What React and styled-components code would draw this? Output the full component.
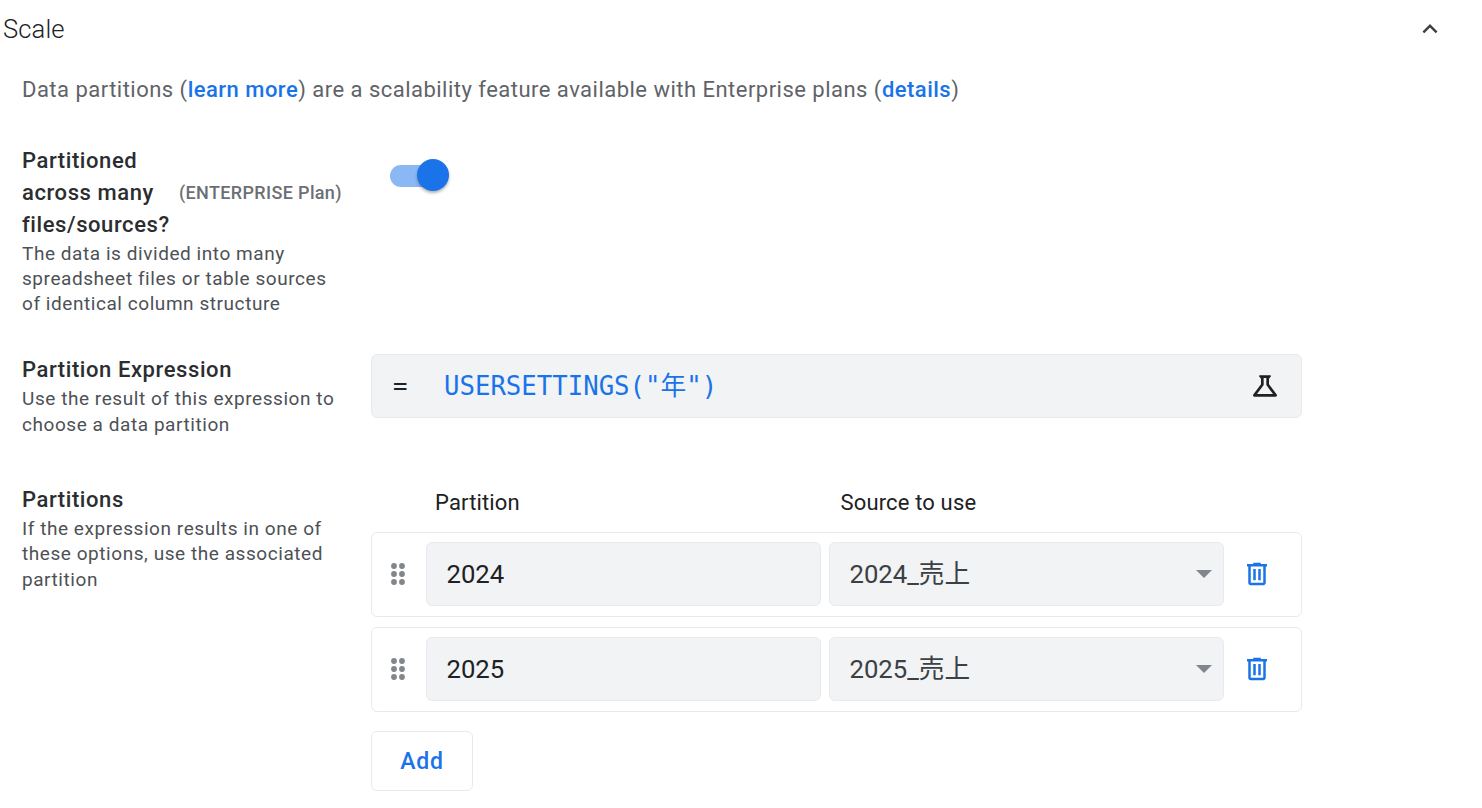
import styled, { createGlobalStyle } from 'styled-components';

const GlobalStyle = createGlobalStyle`
  html, body {
    margin: 0;
    padding: 0;
    background: #fff;
    font-family: Roboto, "Noto Sans CJK JP", sans-serif;
  }
  * { box-sizing: border-box; }
`;

const Page = styled.div`
  width: 1482px;
  height: 808px;
  overflow: hidden;
`;

const SectionHeader = styled.div`
  display: flex;
  justify-content: space-between;
  align-items: center;
  height: 58px;
  padding: 0 37px 0 3px;
`;

const SectionTitle = styled.h2`
  margin: 0;
  font-size: 25.6px;
  font-weight: 300;
  letter-spacing: 0.1px;
  color: #202124;
`;

const ChevronIcon = styled.svg`
  width: 30px;
  height: 30px;
  display: block;
`;

const SectionBody = styled.div`
  padding: 16px 0 0 22px;
`;

const Intro = styled.p`
  margin: 0 0 39px;
  height: 32px;
  line-height: 32px;
  font-size: 22px;
  letter-spacing: 0.48px;
  color: #5f6368;
`;

const TextLink = styled.a`
  color: #1a73e8;
  font-weight: 500;
  text-decoration: none;
`;

const SettingRow = styled.div`
  display: grid;
  grid-template-columns: 349px 931px;
  margin-bottom: ${(p) => p.$gap}px;
`;

const LabelColumn = styled.div`
  display: flex;
  flex-direction: column;
`;

const LabelLine = styled.div`
  display: flex;
  align-items: center;
  gap: 24px;
  width: 320px;
`;

const LabelTitle = styled.div`
  font-size: 22px;
  line-height: 32px;
  font-weight: 500;
  letter-spacing: 0.58px;
  color: #2b2d30;
  width: ${(p) => p.$width || 'auto'};
  flex-shrink: 0;
`;

const PlanTag = styled.span`
  position: relative;
  top: -1px;
  font-size: 18px;
  font-weight: 500;
  letter-spacing: 0.35px;
  color: #6b6f74;
  white-space: nowrap;
`;

const LabelHint = styled.div`
  font-size: 19px;
  line-height: ${(p) => p.$leading || 25.5}px;
  letter-spacing: 0.56px;
  color: #4d5156;
  width: 320px;
`;

const SwitchTrack = styled.div`
  position: relative;
  width: 56px;
  height: 22px;
  margin: 20px 0 0 19px;
  border-radius: 11px;
  background: #8ab8f4;
`;

const SwitchKnob = styled.div`
  position: absolute;
  right: -3px;
  top: -6px;
  width: 32px;
  height: 32px;
  border-radius: 50%;
  background: #1a73e8;
  box-shadow: 0 2px 3px rgba(60, 64, 67, 0.4);
`;

const ExpressionBox = styled.div`
  display: flex;
  align-items: center;
  height: 64px;
  padding: 0 20px 0 21px;
  background: #f1f3f4;
  border: 1px solid #e8eaed;
  border-radius: 6px;
`;

const EqualsSign = styled.span`
  width: 51px;
  font-family: "DejaVu Sans Mono", monospace;
  font-size: 24px;
  color: #202124;
`;

const ExpressionText = styled.span`
  flex: 1;
  padding-top: 1px;
  font-family: "DejaVu Sans Mono", "Noto Sans CJK JP", monospace;
  font-size: 25.7px;
  line-height: 32px;
  font-weight: 400;
  color: #1a73e8;
`;

const FlaskIcon = styled.svg`
  width: 32px;
  height: 32px;
  display: block;
`;

const ColumnHeads = styled.div`
  display: grid;
  grid-template-columns: 405.5px 1fr;
  height: 32px;
  margin: 3px 0 13px;
  padding-left: 64px;
  font-size: 22px;
  line-height: 32px;
  letter-spacing: 0.15px;
  color: #202124;
`;

const PartitionCard = styled.div`
  display: flex;
  align-items: center;
  height: 85px;
  margin-bottom: 10px;
  border: 1px solid #e8eaed;
  border-radius: 6px;
  padding-left: 17px;
`;

const DragHandle = styled.svg`
  width: 18px;
  height: 26px;
  flex-shrink: 0;
  margin-right: 19px;
`;

const Field = styled.div`
  display: flex;
  align-items: center;
  height: 64px;
  width: ${(p) => p.$width}px;
  margin-right: ${(p) => p.$gap}px;
  padding: 0 11px 0 19.5px;
  background: #f1f3f4;
  border: 1px solid #e8eaed;
  border-radius: 6px;
  font-size: 25.7px;
  line-height: 32px;
  color: ${(p) => p.$color};
`;

const FieldValue = styled.span`
  flex: 1;
`;

const Caret = styled.span`
  width: 0;
  height: 0;
  border-left: 8px solid transparent;
  border-right: 8px solid transparent;
  border-top: 8px solid #80868b;
`;

const TrashIcon = styled.svg`
  width: 30px;
  height: 30px;
  display: block;
  flex-shrink: 0;
`;

const AddButton = styled.button`
  display: block;
  width: 102px;
  height: 60px;
  margin-top: 19px;
  padding: 2px 0 0;
  background: #fff;
  border: 1px solid #e8eaed;
  border-radius: 6px;
  font-family: Roboto, sans-serif;
  font-size: 23px;
  font-weight: 500;
  letter-spacing: 0.8px;
  color: #1a73e8;
`;

const partitions = [
  { id: '2024', source: '2024_売上' },
  { id: '2025', source: '2025_売上' },
];

function PartitionRow({ id, source }) {
  return (
    <PartitionCard>
      <DragHandle viewBox="0 0 18 26" fill="#80868b">
        <circle cx="5" cy="5" r="2.9" />
        <circle cx="13" cy="5" r="2.9" />
        <circle cx="5" cy="13" r="2.9" />
        <circle cx="13" cy="13" r="2.9" />
        <circle cx="5" cy="21" r="2.9" />
        <circle cx="13" cy="21" r="2.9" />
      </DragHandle>
      <Field $width={395} $gap={8} $color="#202124">
        <FieldValue>{id}</FieldValue>
      </Field>
      <Field $width={395} $gap={18} $color="#3c4043">
        <FieldValue>{source}</FieldValue>
        <Caret />
      </Field>
      <TrashIcon viewBox="0 0 24 24" fill="#1a73e8">
        <path d="M15 4V3H9v1H4v2h1v13c0 1.1.9 2 2 2h10c1.1 0 2-.9 2-2V6h1V4h-5zm2 15H7V6h10v13zM9 8h2v9H9zm4 0h2v9h-2z" />
      </TrashIcon>
    </PartitionCard>
  );
}

function App() {
  return (
    <Page>
      <GlobalStyle />
      <SectionHeader>
        <SectionTitle>Scale</SectionTitle>
        <ChevronIcon viewBox="0 0 24 24" fill="#3c4043">
          <path d="M7.41 15.41 12 10.83l4.59 4.58L18 14l-6-6-6 6z" />
        </ChevronIcon>
      </SectionHeader>
      <SectionBody>
        <Intro>
          Data partitions (<TextLink href="#">learn more</TextLink>) are a scalability
          feature available with Enterprise plans (<TextLink href="#">details</TextLink>)
        </Intro>

        <SettingRow $gap={37.5}>
          <LabelColumn>
            <LabelTitle>Partitioned</LabelTitle>
            <LabelLine>
              <LabelTitle $width="133px">across many</LabelTitle>
              <PlanTag>(ENTERPRISE Plan)</PlanTag>
            </LabelLine>
            <LabelTitle>files/sources?</LabelTitle>
            <LabelHint $leading={25}>
              The data is divided into many spreadsheet files or table sources of identical
              column structure
            </LabelHint>
          </LabelColumn>
          <div>
            <SwitchTrack>
              <SwitchKnob />
            </SwitchTrack>
          </div>
        </SettingRow>

        <SettingRow $gap={46}>
          <LabelColumn>
            <LabelTitle>Partition Expression</LabelTitle>
            <LabelHint $leading={26}>
              Use the result of this expression to choose a data partition
            </LabelHint>
          </LabelColumn>
          <div>
            <ExpressionBox>
              <EqualsSign>=</EqualsSign>
              <ExpressionText>USERSETTINGS("年")</ExpressionText>
              <FlaskIcon viewBox="0 0 24 24" fill="#202124">
                <path d="M13 11.33 18 18H6l5-6.67V6h2m2.96-2H8.04c-.42 0-.65.48-.39.81L9 6.5v4.17L3.2 18.4c-.49.66-.02 1.6.8 1.6h16c.82 0 1.29-.94.8-1.6L15 10.67V6.5l1.35-1.69c.26-.33.03-.81-.39-.81z" />
              </FlaskIcon>
            </ExpressionBox>
          </div>
        </SettingRow>

        <SettingRow $gap={0}>
          <LabelColumn>
            <LabelTitle>Partitions</LabelTitle>
            <LabelHint>
              If the expression results in one of these options, use the associated partition
            </LabelHint>
          </LabelColumn>
          <div>
            <ColumnHeads>
              <span>Partition</span>
              <span>Source to use</span>
            </ColumnHeads>
            {partitions.map((p) => (
              <PartitionRow key={p.id} id={p.id} source={p.source} />
            ))}
            <AddButton>Add</AddButton>
          </div>
        </SettingRow>
      </SectionBody>
    </Page>
  );
}

export default App;
